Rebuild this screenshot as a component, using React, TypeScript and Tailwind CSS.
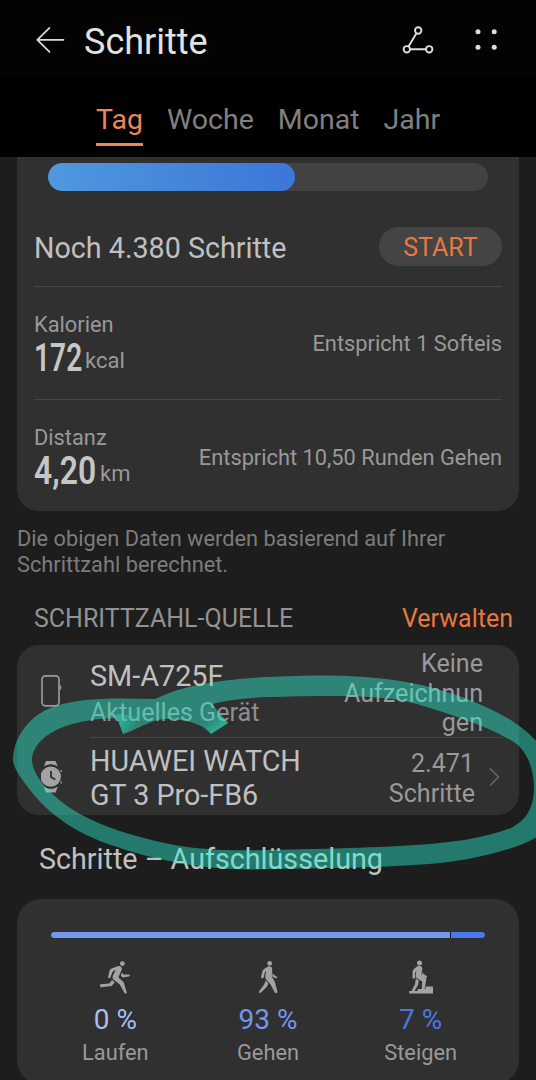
import { ReactNode } from "react";

type metricType = {
      label: string;
      value: string;
      valueStyle: string;
      unit: string;
      hint: string;
}

type activityType = {
      label: string;
      percent: string;
      color: string;
      icon: ReactNode;
}

const tabs = ["Tag", "Woche", "Monat", "Jahr"];

const metrics: metricType[] = [
      { label: "Kalorien", value: "172", valueStyle: "w-[48px] *:scale-x-[0.74]", unit: "kcal", hint: "Entspricht 1 Softeis" },
      { label: "Distanz", value: "4,20", valueStyle: "w-[63px] *:scale-x-[0.84]", unit: "km", hint: "Entspricht 10,50 Runden Gehen" },
];

const RunIcon = () => (
      <svg width="32" height="34" viewBox="0 0 32 34" fill="#a3a3a3">
            <circle cx="23.4" cy="3.6" r="2.4" />
            <path d="M12.5 8.6 L19.2 5.9 Q23 5.7 23 9 L21.5 12.6 L19.4 17.4 L24.6 22 L27.8 32.4 Q27.6 34.2 25.6 33.3 L20.8 24.5 L14.3 19.4 Q12.8 17.6 14 15.5 L16.7 10 L13.7 11.4 L11.5 17.2 Q10.3 18.9 9.1 17.6 L10.4 11.2 Q10.9 9.3 12.5 8.6 Z" />
            <path d="M13 20 L15.8 22.6 L12.5 26 L2 27.2 Q0 26 1.6 24.3 L10.4 23.6 Z" />
            <path d="M22.8 12.6 L24.4 14.6 L30.2 14.5 Q31.6 15.6 30 16.6 L23.4 17.5 L21.8 15.2 Z" />
      </svg>
);

const WalkIcon = () => (
      <svg width="32" height="34" viewBox="0 0 32 34" fill="#a3a3a3">
            <circle cx="17.7" cy="3.4" r="2.4" />
            <path d="M13 8.3 L16.2 6.4 Q20 5.9 20.2 9 L19.8 16.4 L22.7 21.6 L25.5 32 Q24.9 34.2 23 32.7 L18.4 24.2 L14 19.5 Q12.9 17.8 13.3 15.8 L14.3 10.8 L12.9 12.5 L11.6 17.8 Q10.2 19.4 9 17.6 L10.1 12.2 Q10.9 9.3 13 8.3 Z" />
            <path d="M13.7 20.6 L16.4 23.6 L14.9 26.8 L8.8 32.8 Q6.5 33.3 7.1 31.2 L11.8 25 Z" />
            <path d="M20.6 12.4 L21.5 14.4 L25.2 16.9 Q25.3 18.7 23.7 18.3 L20.3 16.4 Z" />
      </svg>
);

const ClimbIcon = () => (
      <svg width="32" height="34" viewBox="0 0 32 34" fill="#a3a3a3">
            <circle cx="14.5" cy="2.9" r="2.5" />
            <path d="M9.4 8.5 L12.6 5.9 Q17.3 5.4 17.3 8.6 L16.5 14.4 L21.2 18.6 Q21.5 20 21 21.2 L19.6 29 L16.7 29 L17.2 21.5 L10.6 17.6 L11.3 10.7 L10.2 12.7 L10 18 Q8.7 19.4 7.4 17.9 L7.6 11.5 Q8 9.5 9.4 8.5 Z" />
            <path d="M10.8 18.5 L13.8 20.4 L13.2 24.8 L9.2 31.4 L6.2 31.4 L10 24.2 Z" />
            <path d="M17.5 11.8 L18.5 13.9 L22 16.3 Q22.4 18.4 20.6 17.9 L17 15.4 Z" />
            <path d="M4.2 31 L12.5 31 L12.5 29 L20.6 29 L20.6 26.6 L28 26.6 L28 33.6 L4.2 33.6 Z" />
      </svg>
);

const activities: activityType[] = [
      { label: "Laufen", percent: "0 %", color: "text-[#a6bdf5]", icon: <RunIcon /> },
      { label: "Gehen", percent: "93 %", color: "text-[#7396ee]", icon: <WalkIcon /> },
      { label: "Steigen", percent: "7 %", color: "text-[#4f76e0]", icon: <ClimbIcon /> },
];

const Header = () => (
      <header className="flex h-[78px] shrink-0 items-center bg-[#030303] pt-px pl-9 pr-9">
            <svg width="29" height="28" viewBox="0 0 29 28" fill="none" stroke="#dcdcdc" strokeWidth="1.7" strokeLinecap="round" strokeLinejoin="round">
                  <path d="M13.5 1.8 L1.3 13.8 L13.5 25.8 M1.3 13.8 H27.5" />
            </svg>
            <h1 className="mt-[5px] ml-[19px] flex-1 text-[36px] leading-[42px] text-[#e2e2e2]">Schritte</h1>
            <svg className="mr-[41px]" width="32" height="30" viewBox="0 0 32 30" fill="none" stroke="#dedede" strokeWidth="1.9">
                  <circle cx="16.2" cy="5.5" r="3.2" />
                  <circle cx="4.8" cy="24.3" r="3.2" />
                  <circle cx="27.2" cy="24.3" r="3.2" />
                  <path d="M14.5 8.3 L6.5 21.5 M8 24.3 H24" />
            </svg>
            <svg width="25" height="24" viewBox="0 0 25 24" fill="#dcdcdc">
                  <circle cx="3" cy="3.8" r="2.5" />
                  <circle cx="19.2" cy="3.8" r="2.5" />
                  <circle cx="3" cy="19.3" r="2.5" />
                  <circle cx="19.2" cy="19.3" r="2.5" />
            </svg>
      </header>
);

const Tabs = () => (
      <nav className="flex h-[79px] shrink-0 gap-6 bg-black pl-24 pt-[25px] text-[28.5px] leading-[33px] text-[#808080]">
            {tabs.map((tab, index) => (
                  <div
                        key={tab}
                        className={index === 0 ? "h-[43px] border-b-3 border-[#e9865a] text-[#e9865a]" : "h-[43px]"}
                  >
                        {tab}
                  </div>
            ))}
      </nav>
);

const SummaryCard = () => (
      <section className="mx-[17px] h-[354px] shrink-0 rounded-b-[22px] bg-[#303030] px-[17px] pt-1.5">
            {/* goal progress */}
            <div className="mx-3.5 h-7 overflow-hidden rounded-full bg-[#424242]">
                  <div className="h-full w-[247px] rounded-full bg-linear-to-r from-[#4f98dd] to-[#3c76d9]" />
            </div>

            <div className="flex h-[96px] items-center justify-between border-b border-[#464646] pt-4">
                  <span className="pt-[3px] text-[28.7px] leading-[34px] text-[#c0c0c0]">Noch 4.380 Schritte</span>
                  <button className="h-[39px] w-[123px] rounded-full bg-[#444] pt-[3px] text-[25px] leading-[36px] text-[#e87840]">START</button>
            </div>

            {metrics.map((item, index) => (
                  <div
                        key={item.label}
                        className={`flex h-[113px] items-center justify-between ${index === 0 ? "border-b border-[#464646]" : ""}`}
                  >
                        <div className="flex flex-col pt-[3px]">
                              <span className="text-[21.8px] leading-[26px] text-[#999]">{item.label}</span>
                              <div className="flex h-10 items-start">
                                    <span className={`${item.valueStyle} whitespace-nowrap`}>
                                          <span className="inline-block origin-left text-[38px] leading-10 font-semibold text-[#c6c6c6]">{item.value}</span>
                                    </span>
                                    <span className="ml-[3px] pt-2.5 text-[22px] leading-[26px] text-[#999]">{item.unit}</span>
                              </div>
                        </div>
                        <span className="pt-0.5 text-[21.8px] leading-[26px] text-[#999]">{item.hint}</span>
                  </div>
            ))}
      </section>
);

const SourceCard = () => (
      <section className="mx-[17px] h-[170px] shrink-0 rounded-[22px] bg-[#303030] text-[#c0c0c0]">
            <div className="flex h-[93px] pl-6">
                  <svg className="mt-[29px]" width="22" height="34" viewBox="0 0 22 34" fill="none" stroke="#999" strokeWidth="1.7">
                        <rect x="1" y="1.8" width="17" height="30" rx="3.5" />
                        <path d="M19.5 11.5 V15.5" strokeWidth="1.4" />
                  </svg>
                  <div className="ml-[27px] flex h-[93px] w-[412px] border-b border-[#464646]">
                        <div className="flex flex-1 flex-col pt-3.5">
                              <span className="text-[28.8px] leading-[34px]">SM-A725F</span>
                              <span className="mt-[5px] text-[25.1px] leading-[30px] text-[#8f8f8f]">Aktuelles Gerät</span>
                        </div>
                        <div className="mr-[19px] pt-1 text-right text-[25.1px] leading-[29.5px] text-[#999]">
                              Keine<br />Aufzeichnun<br />gen
                        </div>
                  </div>
            </div>
            <div className="flex h-[77px] pl-6">
                  <svg className="mt-[22px]" width="22" height="34" viewBox="0 0 22 34" fill="#a3a3a3">
                        <path d="M5 1 H14.6 L16.8 6.6 Q9.8 2.6 2.8 6.6 Z" />
                        <path d="M2.8 26.6 Q9.8 30.6 16.8 26.6 L14.6 32.4 H5 Z" />
                        <circle cx="9.8" cy="16.6" r="10.2" />
                        <circle cx="20.2" cy="11" r="0.9" />
                        <circle cx="20.2" cy="22.4" r="0.9" />
                        <path d="M1.8 7.8 Q9.8 1.8 17.8 7.8 M1.8 25.4 Q9.8 31.4 17.8 25.4" fill="none" stroke="#303030" strokeWidth="1" />
                        <path d="M10 11 V17 L14.3 19.5" fill="none" stroke="#303030" strokeWidth="1.8" />
                  </svg>
                  <div className="ml-[27px] flex-1 pt-[7px] text-[28.7px] leading-[33.5px]">
                        HUAWEI WATCH<br />GT 3 Pro-FB6
                  </div>
                  <div className="pt-[11px] text-right text-[25.1px] leading-[29.5px] text-[#999]">
                        <span className="mr-px">2.471</span><br />Schritte
                  </div>
                  <svg className="mt-[29px] mr-[18px] ml-3.5" width="12" height="20" viewBox="0 0 12 20" fill="none" stroke="#666" strokeWidth="1.7">
                        <path d="M1 1.5 L9.5 10 L1 18.5" />
                  </svg>
            </div>
      </section>
);

const BreakdownCard = () => (
      <section className="mx-[17px] h-[185px] shrink-0 rounded-[24px] bg-[#303030] pt-[33px]">
            <div className="mx-[34px] flex h-1.5 gap-px overflow-hidden rounded-full bg-[#10182e]">
                  <div className="w-[399px] bg-[#7399ef]" />
                  <div className="flex-1 bg-[#4d78ec]" />
            </div>
            <div className="mx-[22px] mt-[22px] grid grid-cols-3">
                  {activities.map((item) => (
                        <div key={item.label} className="flex flex-col items-center">
                              {item.icon}
                              <span className={`mt-[9px] text-[28px] leading-[34px] ${item.color}`}>{item.percent}</span>
                              <span className="mt-[3px] text-[21.8px] leading-[26px] text-[#999]">{item.label}</span>
                        </div>
                  ))}
            </div>
      </section>
);

// Hand drawn marker ring, lies over the source card
const MarkerRing = () => (
      <svg className="pointer-events-none absolute top-0 left-0" width="536" height="1080" viewBox="0 0 536 1080">
            <defs>
                  <linearGradient id="startCap" x1="117" y1="722" x2="135" y2="728" gradientUnits="userSpaceOnUse">
                        <stop offset="0" stopColor="#2be0bd" stopOpacity="0.5" />
                        <stop offset="1" stopColor="#2be0bd" stopOpacity="0" />
                  </linearGradient>
                  <linearGradient id="endCap" x1="222" y1="729" x2="212" y2="717" gradientUnits="userSpaceOnUse">
                        <stop offset="0" stopColor="#2be0bd" stopOpacity="0.5" />
                        <stop offset="1" stopColor="#2be0bd" stopOpacity="0" />
                  </linearGradient>
            </defs>
            <path
                  fill="#2dfddb"
                  fillOpacity="0.42"
                  fillRule="evenodd"
                  d="M155 699 C185 684 225 679 268 677 C315 675 355 674 400 681 C445 688 483 704 509 719 C522 727 531 735 540 745 L540 835 C525 845 500 853 468 859 C420 868 330 868 268 869 C210 872 150 860 100 841 C62 826 42 805 30 790 C18 774 12 766 13 757 C15 735 30 717 48 709 C75 697 115 698 155 699 Z
                  M123 734 L117 718 C100 718 80 721 66 726 C46 733 33 745 32 759 C32 775 48 791 63 803 C88 822 125 834 160 842 C195 850 225 851 268 850 C330 849 395 847 430 844 C470 841 495 834 511 828 C530 818 534 804 534 785 C533 771 530 757 518 745 C495 728 440 710 405 701 C370 694 310 696 268 697 C245 698 226 700 212 704 L228 723 L211 734 C205 726 190 719 165 719 C153 719 140 728 123 734 Z"
            />
            <path fill="url(#startCap)" d="M116 714 L136 716 L140 727 L123 734 Z" />
            <path fill="url(#endCap)" d="M196 719 L212 705 L228 723 L211 734 Z" />
      </svg>
);

export default function App() {
      return (
            <div className="relative flex h-[1080px] w-[536px] flex-col overflow-hidden bg-[#1d1d1d] font-['Roboto',sans-serif]">
                  <Header />
                  <Tabs />
                  <SummaryCard />
                  <p className="mx-[17px] mt-[15px] text-[21.8px] leading-[26px] text-[#7c7c7c]">
                        Die obigen Daten werden basierend auf Ihrer<br />Schrittzahl berechnet.
                  </p>
                  <div className="mt-[28px] mr-[23px] mb-[13px] ml-[34px] flex h-[26px] items-center justify-between text-[25px] leading-[26px]">
                        <h2 className="text-[#929292]">SCHRITTZAHL-QUELLE</h2>
                        <span className="text-[#e87840]">Verwalten</span>
                  </div>
                  <SourceCard />
                  <h2 className="mt-[27px] mb-[23px] ml-[39px] text-[28.7px] leading-[34px] text-[#c0c0c0]">Schritte – Aufschlüsselung</h2>
                  <BreakdownCard />
                  <MarkerRing />
            </div>
      );
}
